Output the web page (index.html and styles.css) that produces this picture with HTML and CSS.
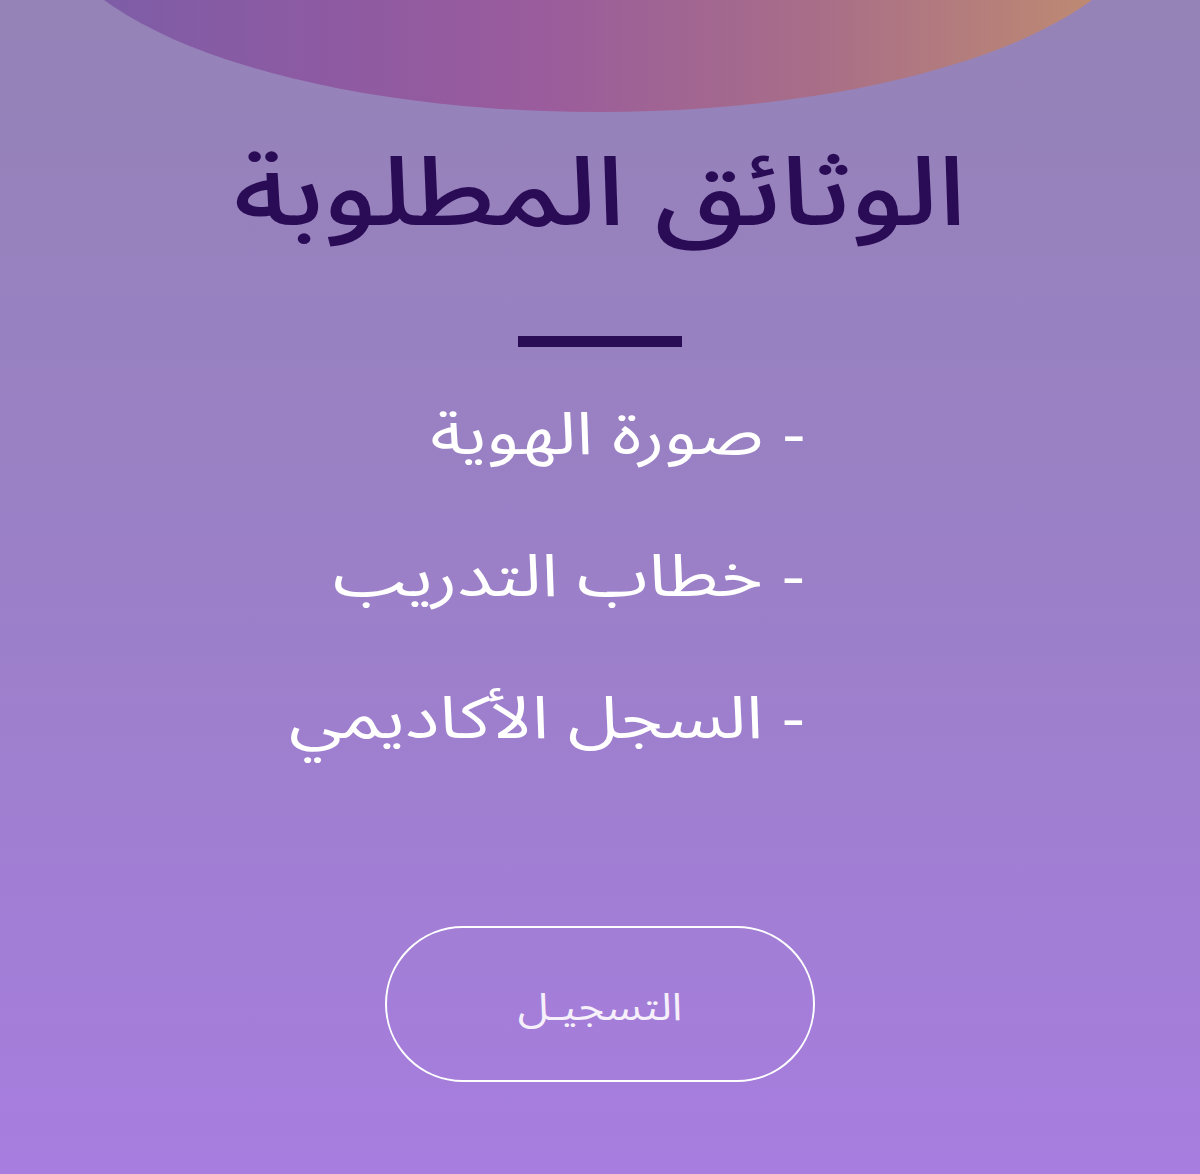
FILE: index.html
```html
<!DOCTYPE html>
<html lang="ar" dir="rtl">
<head>
<meta charset="utf-8">
<title>الوثائق المطلوبة</title>
<link rel="stylesheet" href="styles.css">
</head>
<body>
<div class="page">
  <div class="blob" aria-hidden="true"></div>
  <main class="content">
    <h1 class="title"><span class="wide">الوثائق المطلوبة</span></h1>
    <div class="divider"></div>
    <ul class="docs">
      <li><span class="wide">- صورة الهوية</span></li>
      <li><span class="wide">- خطاب التدريب</span></li>
      <li><span class="wide">- السجل الأكاديمي</span></li>
    </ul>
    <a class="register" href="#"><span class="wide">التسجيـل</span></a>
  </main>
</div>
</body>
</html>
```
FILE: styles.css
```css
* { box-sizing: border-box; }

html, body {
  margin: 0;
  padding: 0;
}

body {
  font-family: "Noto Sans Arabic", "DejaVu Sans", sans-serif;
}

.page {
  position: relative;
  width: 1200px;
  height: 1174px;
  overflow: hidden;
  background: linear-gradient(180deg, #9583b7 0%, #9a80c6 45%, #a77ddf 100%);
}

/* decorative gradient disc peeking in from the top edge */
.blob {
  position: absolute;
  left: 48px;
  top: -288px;
  width: 1100px;
  height: 400px;
  border-radius: 50%;
  background: linear-gradient(90deg, #7a5ea8 0%, #8d5aa2 25%, #9a5c9c 45%, #a86e88 70%, #c28f6e 100%);
}

.content {
  position: relative;
  display: flex;
  flex-direction: column;
  align-items: center;
  padding-top: 130px;
}

/* the brand face is wider than the system Arabic face */
.wide {
  display: inline-block;
}

.title {
  margin: 0;
  font-size: 96px;
  font-weight: 500;
  line-height: 130px;
  color: #2a0b55;
}

.title .wide {
  transform: scaleX(1.19);
  transform-origin: 50% 50%;
}

.divider {
  width: 164px;
  height: 11px;
  margin-top: 76px;
  background: #2a0b55;
}

.docs {
  list-style: none;
  margin: 48px 0 0;
  padding: 0 395px 0 0;
  align-self: stretch;
  display: flex;
  flex-direction: column;
  gap: 60px;
}

.docs li {
  color: #ffffff;
  font-size: 59px;
  line-height: 82px;
}

.docs .wide {
  transform: scaleX(1.22);
  transform-origin: 100% 50%;
}

.register {
  margin-top: 165px;
  width: 430px;
  height: 156px;
  border: 2px solid #ffffff;
  border-radius: 80px;
  display: flex;
  align-items: center;
  justify-content: center;
  color: #f6f0fb;
  font-size: 38px;
  text-decoration: none;
}

.register .wide {
  transform: scaleX(1.16);
  transform-origin: 50% 50%;
  margin-top: 8px;
}
```
